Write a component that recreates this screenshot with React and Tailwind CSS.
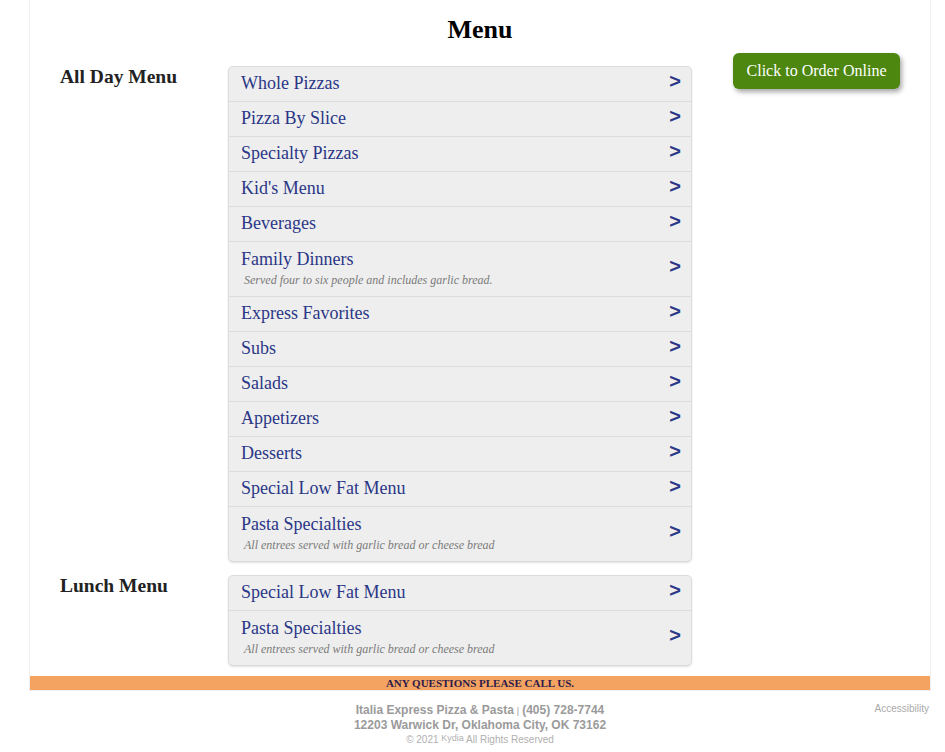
import React from "react";

const allDay = [
  { name: "Whole Pizzas" },
  { name: "Pizza By Slice" },
  { name: "Specialty Pizzas" },
  { name: "Kid's Menu" },
  { name: "Beverages" },
  { name: "Family Dinners", note: "Served four to six people and includes garlic bread." },
  { name: "Express Favorites" },
  { name: "Subs" },
  { name: "Salads" },
  { name: "Appetizers" },
  { name: "Desserts" },
  { name: "Special Low Fat Menu" },
  { name: "Pasta Specialties", note: "All entrees served with garlic bread or cheese bread" },
];

const lunch = [
  { name: "Special Low Fat Menu" },
  { name: "Pasta Specialties", note: "All entrees served with garlic bread or cheese bread" },
];

const rowHeight = (item, first) => {
  if (first) return item.note ? "h-[54px]" : "h-[34px]";
  return item.note ? "h-[55px] border-t border-[#dcdcdc]" : "h-[35px] border-t border-[#dcdcdc]";
};

const MenuRow = ({ item, first }) => (
  <a
    href="#"
    className={`flex items-center justify-between pl-[12px] pr-[10px] ${rowHeight(item, first)}`}
  >
    <div className={`flex flex-col self-start ${item.note ? "pt-[7px]" : "pt-[6px]"}`}>
      <span className="text-[18px] leading-[20px] text-[#2a3787]">{item.name}</span>
      {item.note && (
        <span className="mt-[4px] pl-[3px] text-[12px] leading-[14px] italic text-[#7a7a7a]">
          {item.note}
        </span>
      )}
    </div>
    <span className="mb-[6px] font-['Liberation_Sans',Arial,sans-serif] text-[20px] font-bold leading-[20px] text-[#2a3787]">
      &gt;
    </span>
  </a>
);

const Section = ({ title, items, className }) => (
  <div className={`flex ${className || ""}`}>
    <h2 className="w-[168px] shrink-0 text-[19.5px] font-bold leading-[22px] text-[#222]">
      {title}
    </h2>
    <div className="w-[464px] overflow-hidden rounded-[5px] border border-[#dcdcdc] bg-[#eeeeee] shadow-[0_1px_2px_rgba(0,0,0,0.12)]">
      {items.map((item, i) => (
        <MenuRow key={item.name} item={item} first={i === 0} />
      ))}
    </div>
  </div>
);

export default function App() {
  return (
    <div className="min-h-screen bg-white font-['Liberation_Serif','Times_New_Roman',serif]">
      <div className="ml-[29px] w-[902px] border-x border-b border-[#efefef]">
        <h1 className="pt-[15px] text-center text-[26px] font-bold leading-[30px] text-black">
          Menu
        </h1>

        <div className="mt-[8px] flex pl-[30px]">
          <div className="pt-[13px]">
            <Section title="All Day Menu" items={allDay} />
            <Section title="Lunch Menu" items={lunch} className="mt-[13px]" />
          </div>
          <div className="ml-[41px]">
            <button className="h-[36px] w-[167px] rounded-[6px] bg-[#4d870f] text-[16px] text-white shadow-[2px_3px_5px_rgba(0,0,0,0.35)]">
              Click to Order Online
            </button>
          </div>
        </div>

        <div className="mt-[10px] bg-[#f4a460] text-center text-[11px] font-bold uppercase leading-[14px] text-[#2e1a4a]">
          Any questions please call us.
        </div>
      </div>

      <footer className="ml-[29px] grid w-[902px] grid-cols-[1fr_auto_1fr] pt-[12px] font-['Liberation_Sans',Arial,sans-serif]">
        <div />
        <div className="flex flex-col items-center">
          <p className="text-[12px] font-bold leading-[14px] text-[#9a9a9a]">
            Italia Express Pizza &amp; Pasta
            <span className="mx-[3px] text-[9px] font-normal">|</span>
            (405) 728-7744
          </p>
          <p className="text-[12px] font-bold leading-[14px] text-[#9a9a9a]">
            12203 Warwick Dr, Oklahoma City, OK 73162
          </p>
          <p className="mt-[1px] text-[10px] leading-[14px] text-[#b0b0b0]">
            © 2021 <span className="relative -top-[2px] text-[9px]">Kydia</span> All Rights Reserved
          </p>
        </div>
        <div className="flex justify-end pr-[2px]">
          <a href="#" className="text-[10px] leading-[12px] text-[#aaaaaa]">
            Accessibility
          </a>
        </div>
      </footer>
    </div>
  );
}
